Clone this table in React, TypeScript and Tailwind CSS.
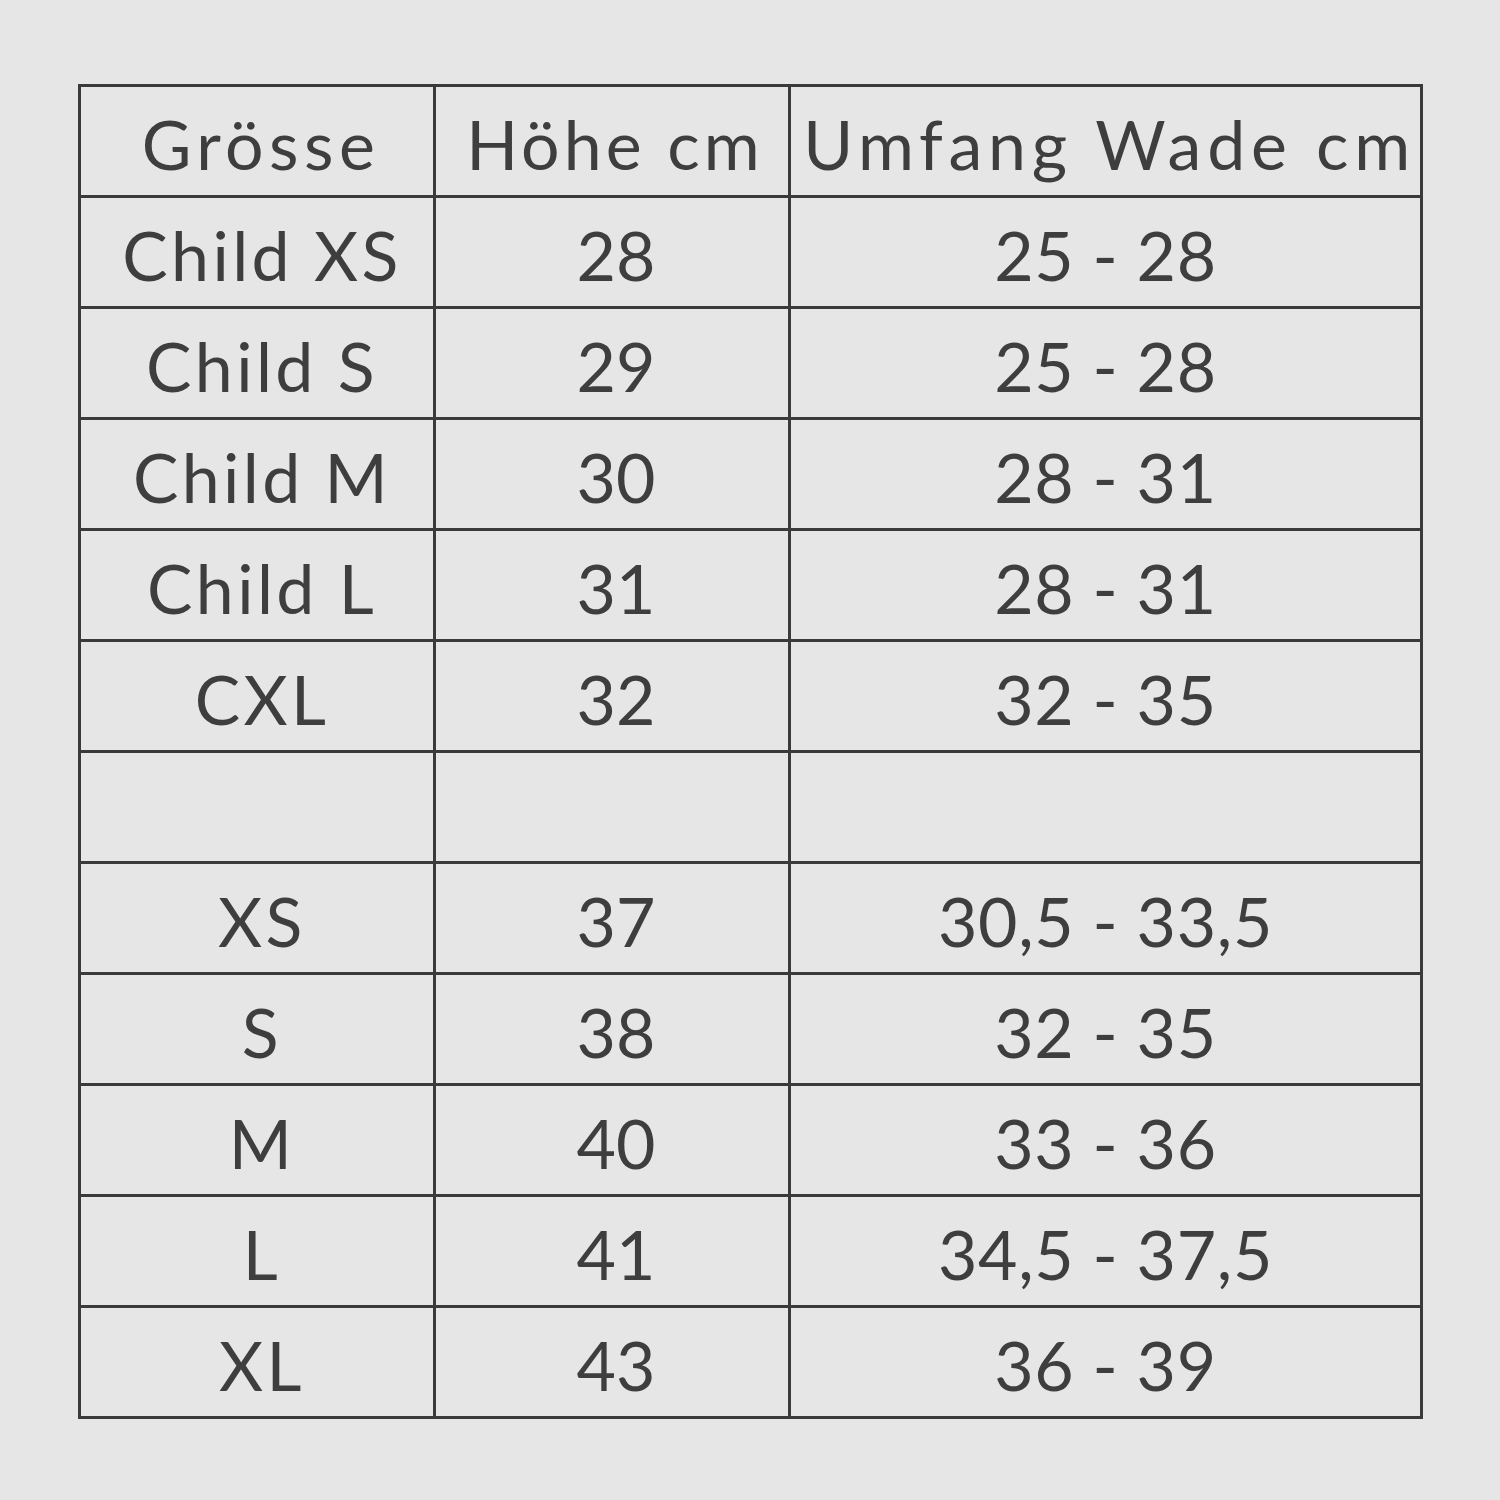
const rows: [string, string, string][] = [
  ["Child XS", "28", "25 - 28"],
  ["Child S", "29", "25 - 28"],
  ["Child M", "30", "28 - 31"],
  ["Child L", "31", "28 - 31"],
  ["CXL", "32", "32 - 35"],
  ["", "", ""],
  ["XS", "37", "30,5 - 33,5"],
  ["S", "38", "32 - 35"],
  ["M", "40", "33 - 36"],
  ["L", "41", "34,5 - 37,5"],
  ["XL", "43", "36 - 39"],
];

const cell = "border-[3px] border-[#3a3a3a] text-center pt-[6px]";

export default function App() {
  return (
    <div className="w-[1500px] h-[1500px] bg-[#e6e6e6] pt-[84px] pl-[78px] font-['Lato',sans-serif] text-[#3e3e3e]">
      <table className="border-collapse table-fixed w-[1345px] text-[68px] leading-none">
        <colgroup>
          <col className="w-[355px]" />
          <col className="w-[355px]" />
          <col />
        </colgroup>
        <thead>
          <tr className="h-[111px]">
            <th className={`${cell} pl-[8px] font-normal tracking-[0.08em]`}>Grösse</th>
            <th className={`${cell} pl-[6px] font-normal tracking-[0.06em]`}>Höhe cm</th>
            <th className={`${cell} pl-[8px] font-normal tracking-[0.085em]`}>Umfang Wade cm</th>
          </tr>
        </thead>
        <tbody>
          {rows.map((r, i) => (
            <tr key={i} className="h-[111px]">
              <td className={`${cell} pl-[10px] tracking-[0.05em]`}>{r[0]}</td>
              <td className={`${cell} pl-[8px]`}>{r[1]}</td>
              <td className={`${cell} tracking-[0.01em]`}>{r[2]}</td>
            </tr>
          ))}
        </tbody>
      </table>
    </div>
  );
}
